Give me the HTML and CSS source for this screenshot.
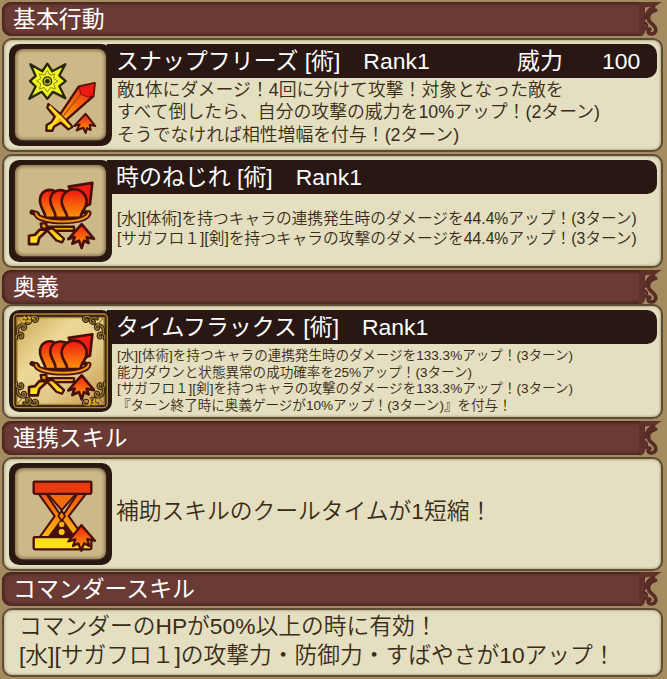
FILE: index.html
```html
<!DOCTYPE html>
<html lang="ja">
<head>
<meta charset="utf-8">
<title>スキル詳細</title>
<link rel="stylesheet" href="styles.css">
</head>
<body>
<svg class="defs" aria-hidden="true">
  <defs>
    <linearGradient id="fire" x1="0" y1="0" x2="0" y2="1"><stop offset="0" stop-color="#f51d12"/><stop offset="1" stop-color="#fba908"/></linearGradient>
    <linearGradient id="orb" gradientUnits="userSpaceOnUse" x1="0" y1="60" x2="0" y2="142"><stop offset="0" stop-color="#f01a12"/><stop offset="1" stop-color="#fb9408"/></linearGradient>
    <linearGradient id="blade" x1="1" y1="0" x2="0" y2="1"><stop offset="0" stop-color="#ef1712"/><stop offset=".5" stop-color="#f77a0c"/><stop offset="1" stop-color="#fff01b"/></linearGradient>
    <linearGradient id="gold" gradientUnits="userSpaceOnUse" x1="0" y1="155" x2="0" y2="220"><stop offset="0" stop-color="#eda016"/><stop offset="1" stop-color="#fff018"/></linearGradient>
    <linearGradient id="glass" gradientUnits="userSpaceOnUse" x1="0" y1="100" x2="0" y2="270"><stop offset="0" stop-color="#ee4a0e"/><stop offset=".5" stop-color="#f98a0b"/><stop offset="1" stop-color="#ffce14"/></linearGradient>
    <linearGradient id="shine" x1="0" y1="0" x2="1" y2="1"><stop offset="0" stop-color="#cda654"/><stop offset=".35" stop-color="#ecd998"/><stop offset=".65" stop-color="#e2c888"/><stop offset="1" stop-color="#c49a4b"/></linearGradient>
    <filter id="soft" x="-5%" y="-5%" width="110%" height="110%"><feGaussianBlur stdDeviation="5"/></filter>
    <symbol id="frame" viewBox="0 0 309 307">
      <rect width="309" height="307" rx="31" fill="#291711"/>
      <rect x="18" y="15" width="273" height="275" rx="24" fill="#8d7654"/>
      <rect x="23" y="20" width="263" height="265" rx="20" fill="#cdb887" filter="url(#soft)"/>
    </symbol>
    <symbol id="cart" viewBox="0 0 240 252">
      <g stroke="#48100a" stroke-width="8" stroke-linejoin="round" stroke-linecap="round">
        <path d="M140 50 211 39 204 103 186 111Z" fill="#f01d12"/>
        <path d="M70 144C72 130 54 114 54 92C54 68 73 55 95 62L112 144Z" fill="url(#orb)"/>
        <path d="M100 144C104 126 85 114 85 91C85 67 107 55 130 64L142 144Z" fill="url(#orb)"/>
        <path d="M135 144C138 128 119 118 119 95C119 73 136 58 156 58C177 58 194 74 194 96C194 118 174 126 176 144Z" fill="url(#orb)"/>
        <path d="M56 161 73 161 75 177 59 177Z" fill="#db9518" stroke-width="7"/>
        <path d="M75 171H156V183H75Z" fill="#f2b517" stroke-width="7"/>
        <path d="M73 179 92 176 126 207 120 218 103 212Z" fill="url(#gold)" stroke-width="7"/>
        <path d="M52 180H78L52 204 47 223H21V198L39 195Z" fill="url(#gold)"/>
        <path d="M42 131C44 145 77 155 122 155C168 155 198 145 200 130" fill="none" stroke-width="17"/>
        <path d="M46 133 30 127" fill="none" stroke-width="15"/>
        <path d="M184 126 201 130" fill="none" stroke-width="13"/>
        <path d="M31 127 42 131C44 145 77 155 122 155C168 155 198 145 200 130" fill="none" stroke="#ed9411" stroke-width="6"/>
        <circle cx="33" cy="128" r="4" fill="#a64a13" stroke-width="6"/>
        <path d="M179 163 216 207 194 203 200 220 186 213 179 235 171 213 151 222 158 202 139 208Z" fill="url(#fire)"/>
      </g>
    </symbol>
    <symbol id="filigree" viewBox="0 0 80 80">
      <g fill="none" stroke="#382711" stroke-width="11" stroke-linecap="round"><path d="M6 76C-1 56 29 51 25 68C22 77 14 70 19 66M9 55C7 29 36 23 34 40C32 50 20 44 27 37M29 12C44 -1 59 20 45 26C36 28 36 17 43 17M51 8C66 -1 79 11 68 19C60 23 58 14 64 13"/></g>
      <g fill="none" stroke="#a27d36" stroke-width="4" stroke-linecap="round"><path d="M6 76C-1 56 29 51 25 68C22 77 14 70 19 66M9 55C7 29 36 23 34 40C32 50 20 44 27 37M29 12C44 -1 59 20 45 26C36 28 36 17 43 17M51 8C66 -1 79 11 68 19C60 23 58 14 64 13M7 8 29 31"/></g>
    </symbol>
    <symbol id="curl" viewBox="0 0 72 105">
      <path d="M0 0H70C58 5 52 12 45 16C35 13 25 14 17 18V93C12 101 7 103 0 103Z" fill="#5e312b"/>
      <g fill="none" stroke="#582c26" stroke-linecap="round">
        <path d="M44 17C30 19 23 30 20 48" stroke-width="10"/>
        <path d="M50 25C33 29 24 43 30 56C36 67 55 73 50 87C46 99 27 99 27 86C27 80 31 79 33 83" stroke-width="11"/>
        <path d="M18 62C26 67 25 74 18 81" stroke-width="8"/>
      </g>
    </symbol>
  </defs>
</svg>
<main class="panel">
  <h2 class="heading">基本行動<svg class="curl"><use href="#curl"/></svg></h2>
  <section class="card card-basic">
    <svg class="icon" viewBox="0 0 309 307" preserveAspectRatio="none">
      <use href="#frame" width="309" height="307"/>
      <g transform="translate(-27 -27)" stroke-linejoin="round">
        <path d="M142 86 157 109 196 88 178 122 197 139 178 154 196 190 159 171 142 192 125 171 88 192 107 155 90 139 107 123 91 88 127 109Z" fill="#f1f51b" stroke="#29270b" stroke-width="7"/>
        <path d="M142 107 150 121 164 117 161 131 174 139 161 147 166 162 151 158 142 171 133 158 118 162 123 147 110 139 123 131 118 117 134 121Z" fill="#f8fb23" stroke="#8b8a18" stroke-width="3"/>
        <circle cx="142" cy="139" r="13" fill="#b9bb1b" stroke="#303009" stroke-width="4"/><circle cx="142" cy="139" r="7" fill="#292a0c"/>
        <path d="M284 145 280 184 199 255 217 276 205 284 182 264 162 276 157 288H139L140 271 155 262 164 246 142 219 145 208 181 238 236 155Z" fill="url(#blade)" stroke="#48100a" stroke-width="7"/>
        <path d="M242 178 191 242" fill="none" stroke="#a94b0c" stroke-width="4"/>
        <path d="M238 157 284 145 280 183 263 187 242 178Z" fill="#ed1913" stroke="#851009" stroke-width="3"/>
        <path d="M148 214 210 277M178 243 152 276" stroke="#ffe22a" stroke-width="7"/>
        <path d="M179 235 197 254" stroke="#561809" stroke-width="4"/>
        <path d="M257 237 286 274 269 270 272 286 261 280 257 295 250 279 230 287 239 269 222 274Z" fill="url(#fire)" stroke="#48100a" stroke-width="6"/>
      </g>
    </svg>
    <div class="body">
      <h3 class="title"><span>スナップフリーズ [術]　Rank1</span><span class="power">威力</span><span class="value">100</span></h3>
      <p class="desc">敵1体にダメージ！4回に分けて攻撃！対象となった敵を<br>すべて倒したら、自分の攻撃の威力を10%アップ！(2ターン)<br>そうでなければ相性増幅を付与！(2ターン)</p>
    </div>
  </section>
  <section class="card card-twist">
    <svg class="icon" viewBox="0 0 309 307" preserveAspectRatio="none">
      <use href="#frame" width="309" height="307"/><use href="#cart" x="39" y="30" width="240" height="252"/>
    </svg>
    <div class="body">
      <h3 class="title">時のねじれ [術]　Rank1</h3>
      <p class="desc medium">[水][体術]を持つキャラの連携発生時のダメージを44.4%アップ！(3ターン)<br>[サガフロ１][剣]を持つキャラの攻撃のダメージを44.4%アップ！(3ターン)</p>
    </div>
  </section>
  <h2 class="heading heading-secret">奥義<svg class="curl"><use href="#curl"/></svg></h2>
  <section class="card card-secret">
    <svg class="icon" viewBox="0 0 309 307" preserveAspectRatio="none">
      <rect width="309" height="307" rx="31" fill="#291711"/>
      <rect x="14" y="12" width="281" height="282" rx="12" fill="#3b2a13" stroke="#b28632" stroke-width="4"/>
      <rect x="24" y="23" width="261" height="261" fill="url(#shine)" stroke="#ad8539" stroke-width="4"/>
      <g><use href="#filigree" x="17" y="15" width="76" height="76"/>
      <use href="#filigree" transform="translate(292 15) scale(-1 1)" width="76" height="76"/>
      <use href="#filigree" transform="translate(17 291) scale(1 -1)" width="76" height="76"/>
      <use href="#filigree" transform="translate(292 291) scale(-1 -1)" width="76" height="76"/></g>
      <path d="M36 25h44M28 34h38M46 18v22M60 18v22M229 275h44M237 284h35M242 266v24M257 266v24" stroke="#e0ad35" stroke-width="5" stroke-dasharray="7 4"/>
      <use href="#cart" x="39" y="34" width="240" height="252"/>
    </svg>
    <div class="body">
      <h3 class="title">タイムフラックス [術]　Rank1</h3>
      <p class="desc small">[水][体術]を持つキャラの連携発生時のダメージを133.3%アップ！(3ターン)<br>能力ダウンと状態異常の成功確率を25%アップ！(3ターン)<br>[サガフロ１][剣]を持つキャラの攻撃のダメージを133.3%アップ！(3ターン)<br>『ターン終了時に奥義ゲージが10%アップ！(3ターン)』を付与！</p>
    </div>
  </section>
  <h2 class="heading">連携スキル<svg class="curl"><use href="#curl"/></svg></h2>
  <section class="card card-link">
    <svg class="icon" viewBox="0 0 309 307" preserveAspectRatio="none">
      <use href="#frame" width="309" height="307"/>
      <g transform="translate(-27 -23)" stroke="#48100a" stroke-width="7" stroke-linejoin="round">
        <path d="M143 116H228L185 165Z" fill="#f36b0c" stroke-width="6"/>
        <path d="M185 190 224 246H146Z" fill="#48100a" stroke="none"/>
        <path d="M116 116H139L188 190 146 246H119L164 183Z" fill="url(#glass)" stroke-width="6"/>
        <path d="M258 116H232L183 190 224 246H251L206 183Z" fill="url(#glass)" stroke-width="6"/>
        <path d="M185 166 175 183 185 197 195 183Z" fill="#ef850c" stroke-width="5"/>
        <circle cx="185" cy="208" r="8" fill="#f9a812" stroke="none"/><circle cx="185" cy="231" r="9" fill="#fec516" stroke="none"/>
        <rect x="101" y="79" width="173" height="37" rx="4" fill="#e63a12"/>
        <rect x="101" y="246" width="173" height="37" rx="4" fill="#ffdf17"/>
        <path d="M244 210 285 257 262 252 268 273 252 265 244 287 235 265 219 273 226 253 205 259Z" fill="url(#fire)"/>
      </g>
    </svg>
    <p class="large">補助スキルのクールタイムが1短縮！</p>
  </section>
  <h2 class="heading">コマンダースキル<svg class="curl"><use href="#curl"/></svg></h2>
  <section class="card card-commander">
    <p class="large">コマンダーのHPが50%以上の時に有効！<br>[水][サガフロ１]の攻撃力・防御力・すばやさが10アップ！</p>
  </section>
</main>
</body>
</html>
```
FILE: styles.css
```css
* { box-sizing: border-box; }
body {
  margin: 0;
  background: #a58b60;
  color: #3a2c17;
  font-family: "Liberation Sans", "Noto Sans CJK JP", sans-serif;
  font-weight: 350;
}
h2, h3, p { margin: 0; font-weight: inherit; }
.defs { position: absolute; width: 0; height: 0; }
.panel { width: 667px; height: 679px; padding: 2px 4px 0 2px; overflow: hidden; }
.heading {
  position: relative;
  height: 34px;
  margin-right: 18px;
  padding-left: 11px;
  border-radius: 9px 0 7px 9px;
  background: #6a3a35;
  box-shadow: inset 0 2px 3px #44211c, inset 2px -2px 3px #4c2722;
  color: #fff;
  font-size: 22.9px;
  font-weight: 400;
  line-height: 34px;
}
.curl { position: absolute; top: 0; left: 637px; width: 24px; height: 35px; }
.card {
  display: flex;
  height: 114px;
  margin-top: 2px;
  padding: 4px 4px 0 5px;
  border: 2px solid #5f4c34;
  border-radius: 10px;
  background: #e4dfc1;
  box-shadow: inset 0 0 3px #8c7b58;
}
.icon { position: relative; z-index: 1; flex: none; width: 103px; height: 102px; }
.body { flex: 1; min-width: 0; }
.title {
  display: flex;
  height: 34px;
  margin-left: -5px;
  padding-left: 9px;
  border-radius: 0 10px 10px 0;
  background: #281712;
  color: #fff;
  font-size: 22.95px;
  font-weight: 400;
  line-height: 34px;
  white-space: pre;
}
.power { margin-left: auto; }
.value { width: 78px; padding-left: 39px; margin-right: 16px; }
.desc { padding: 1px 0 0 5px; font-size: 17.85px; line-height: 22.4px; white-space: nowrap; }
.desc.medium { padding-top: 15px; font-size: 15.73px; line-height: 19.5px; }
.desc.small { padding-top: 4px; font-size: 13.57px; line-height: 16.6px; }
.large { font-size: 22.75px; line-height: 29px; white-space: nowrap; }
.heading-secret { margin-top: 2px; }
.card-secret { margin-top: 0; height: 115px; }
.card-secret + .heading { margin-top: 2px; }
.card-link .large { padding: 34px 0 0 4px; }
.card-link + .heading { margin-top: 1px; }
.card-commander { height: 69px; padding: 2px 15px; }
```
